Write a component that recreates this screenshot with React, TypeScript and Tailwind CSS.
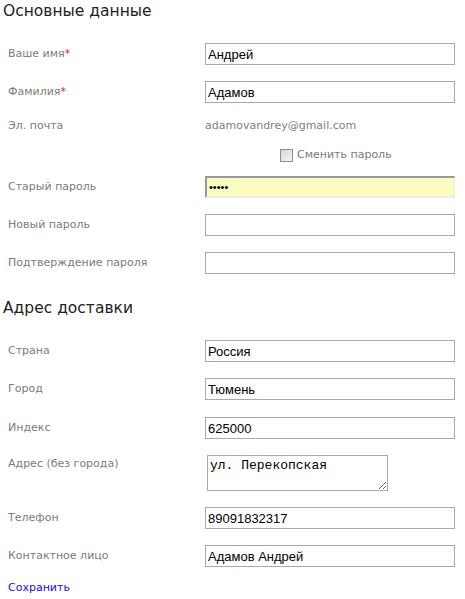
import React from "react";

const label = "w-[205px] shrink-0 pl-2 text-[11px] text-[#7b7b7b]";
const field =
  "h-[22px] w-[250px] border border-[#aaaaaa] bg-white px-[2px] text-[13px] text-black outline-none";

function Zvezda() {
  return <span className="text-[#e0201c]">*</span>;
}

function Stroka({
  nazvanie,
  znachenie,
  otstup,
}: {
  nazvanie: React.ReactNode;
  znachenie: string;
  otstup: string;
}) {
  return (
    <div className={"flex h-[22px] items-center " + otstup}>
      <span className={label}>{nazvanie}</span>
      <input
        readOnly
        defaultValue={znachenie}
        className={field}
        style={{ fontFamily: "'Liberation Sans', Arial, sans-serif" }}
      />
    </div>
  );
}

export default function App() {
  return (
    <div
      className="w-[465px] bg-white pb-4"
      style={{ fontFamily: "'DejaVu Sans', Verdana, sans-serif" }}
    >
      <h2 className="h-[27px] pl-[3px] text-[15.5px] leading-[22px] text-[#222]">
        Основные данные
      </h2>
      <Stroka
        otstup="mt-[16px]"
        nazvanie={
          <>
            Ваше имя
            <Zvezda />
          </>
        }
        znachenie="Андрей"
      />
      <Stroka
        otstup="mt-[16px]"
        nazvanie={
          <>
            Фамилия
            <Zvezda />
          </>
        }
        znachenie="Адамов"
      />
      <div className="mt-[12px] flex h-[22px] items-center">
        <span className={label}>Эл. почта</span>
        <span className="text-[11px] text-[#808080]">adamovandrey@gmail.com</span>
      </div>
      <div className="mt-[7px] flex h-[22px] items-center pl-[280px]">
        <span className="h-[13px] w-[13px] border border-[#8f8f8f] bg-gradient-to-br from-[#d6d6d6] to-[#f6f6f6]" />
        <span className="ml-[4px] text-[11px] text-[#7b7b7b]">Сменить пароль</span>
      </div>
      <div className="mt-[10px] flex h-[22px] items-center">
        <span className={label}>Старый пароль</span>
        <input
          type="password"
          readOnly
          defaultValue="12345"
          className="h-[22px] w-[250px] border-t-2 border-l-2 border-r border-b-2 border-t-[#999] border-l-[#999] border-r-[#e8e8e8] border-b-[#ececec] bg-[#fafcc0] px-[2px] text-[11px] text-black outline-none"
          style={{ fontFamily: "'Liberation Sans', Arial, sans-serif" }}
        />
      </div>
      <Stroka otstup="mt-[16px]" nazvanie="Новый пароль" znachenie="" />
      <Stroka otstup="mt-[16px]" nazvanie="Подтверждение пароля" znachenie="" />

      <h2 className="mt-[23px] h-[22px] pl-[3px] text-[15.5px] leading-[22px] text-[#222]">
        Адрес доставки
      </h2>
      <Stroka otstup="mt-[21px]" nazvanie="Страна" znachenie="Россия" />
      <Stroka otstup="mt-[16px]" nazvanie="Город" znachenie="Тюмень" />
      <Stroka otstup="mt-[17px]" nazvanie="Индекс" znachenie="625000" />
      <div className="mt-[16px] flex">
        <span className={label + " pt-[1px]"}>Адрес (без города)</span>
        <textarea
          readOnly
          defaultValue="ул. Перекопская"
          className="ml-[2px] h-[36px] w-[181px] border border-[#aaaaaa] px-[2px] pt-[2px] text-[13px] leading-[15px] text-black outline-none"
          style={{ fontFamily: "'Liberation Mono', 'Courier New', monospace" }}
        />
      </div>
      <Stroka otstup="mt-[16px]" nazvanie="Телефон" znachenie="89091832317" />
      <Stroka otstup="mt-[16px]" nazvanie="Контактное лицо" znachenie="Адамов Андрей" />
      <a href="#" className="mt-[13px] block pl-2 text-[11px] text-[#1a0dee]">
        Сохранить
      </a>
    </div>
  );
}
